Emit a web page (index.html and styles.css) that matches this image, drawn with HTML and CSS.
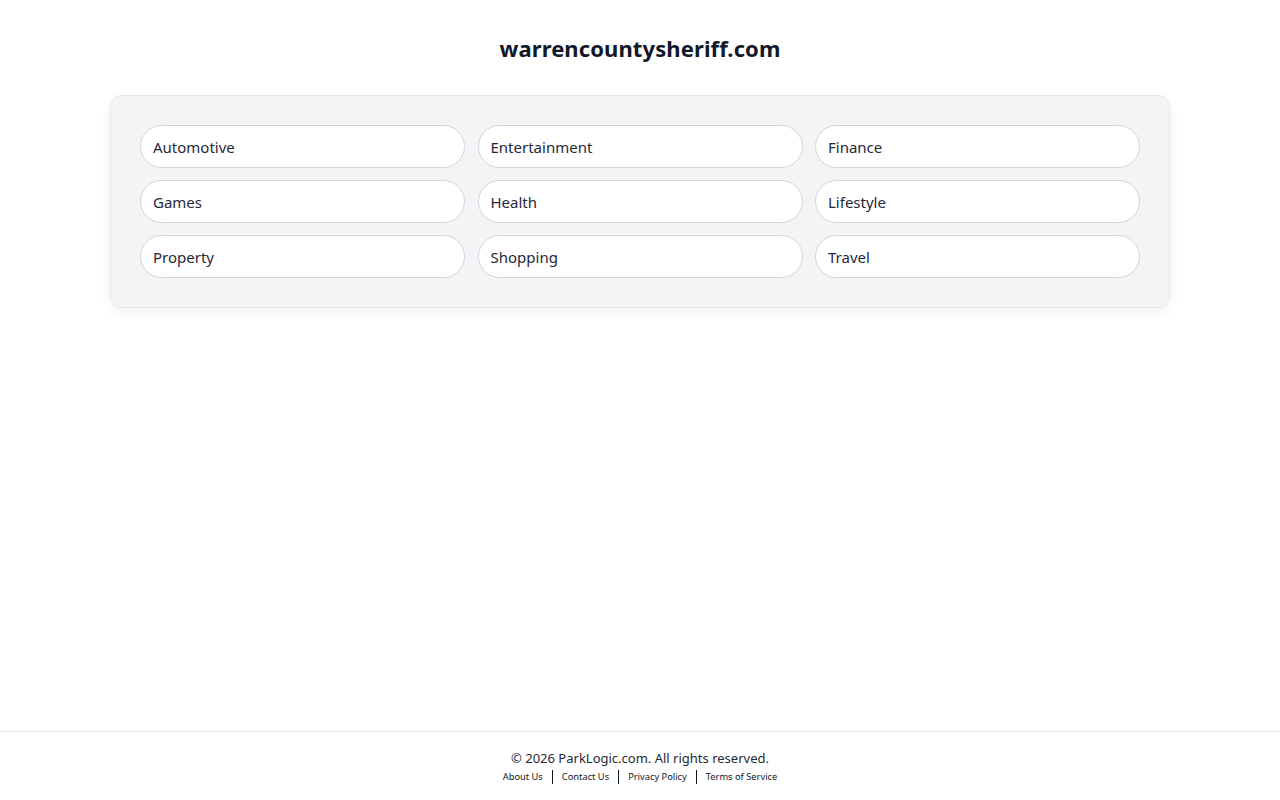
FILE: index.html
```html
<!DOCTYPE html>
<html lang="en">
<head>
<meta charset="utf-8">
<title>warrencountysheriff.com</title>
<link rel="stylesheet" href="styles.css">
</head>
<body>
<div class="page">
  <main class="main">
    <h1 class="title">warrencountysheriff.com</h1>
    <div class="card">
      <div class="grid">
        <a class="pill" href="#">Automotive</a>
        <a class="pill" href="#">Entertainment</a>
        <a class="pill" href="#">Finance</a>
        <a class="pill" href="#">Games</a>
        <a class="pill" href="#">Health</a>
        <a class="pill" href="#">Lifestyle</a>
        <a class="pill" href="#">Property</a>
        <a class="pill" href="#">Shopping</a>
        <a class="pill" href="#">Travel</a>
      </div>
    </div>
  </main>
  <footer class="footer">
    <div class="copy">© 2026 ParkLogic.com. All rights reserved.</div>
    <div class="links">
      <a href="#">About Us</a><span class="sep"></span><a href="#">Contact Us</a><span class="sep"></span><a href="#">Privacy Policy</a><span class="sep"></span><a href="#">Terms of Service</a>
    </div>
  </footer>
</div>
</body>
</html>
```
FILE: styles.css
```css
* { box-sizing: border-box; }
html, body { margin: 0; padding: 0; }
body {
  font-family: "Noto Sans", "Open Sans", "Liberation Sans", sans-serif;
  color: #111827;
  background: #ffffff;
}
.page {
  min-height: 100vh;
  display: flex;
  flex-direction: column;
}
.main {
  flex: 1;
  padding-top: 32px;
}
.title {
  margin: 0 0 30px;
  text-align: center;
  font-size: 22px;
  line-height: 33px;
  font-weight: 700;
  color: #111827;
  letter-spacing: 0.1px;
}
.card {
  width: 1060px;
  margin: 0 auto;
  background: #f3f4f6;
  border: 1px solid #e5e7eb;
  border-radius: 12px;
  padding: 29px;
  box-shadow: 0 4px 12px rgba(0,0,0,0.06);
}
.grid {
  display: grid;
  grid-template-columns: repeat(3, 1fr);
  column-gap: 12.5px;
  row-gap: 12px;
}
.pill {
  display: flex;
  align-items: center;
  height: 43px;
  padding: 0 12px;
  background: #ffffff;
  border: 1px solid #d1d5db;
  border-radius: 9999px;
  font-size: 15px;
  color: #1f2937;
  text-decoration: none;
}
.footer {
  border-top: 1px solid #e5e7eb;
  padding: 16px 0 16px;
  text-align: center;
}
.copy {
  font-size: 13px;
  line-height: 20px;
  color: #1f2937;
}
.links {
  display: flex;
  justify-content: center;
  align-items: center;
  margin-top: 2px;
  font-size: 9.3px;
  line-height: 14px;
}
.links a {
  color: #111827;
  text-decoration: none;
}
.sep {
  display: inline-block;
  width: 1px;
  height: 14px;
  background: #111827;
  margin: 0 9px;
}
```
